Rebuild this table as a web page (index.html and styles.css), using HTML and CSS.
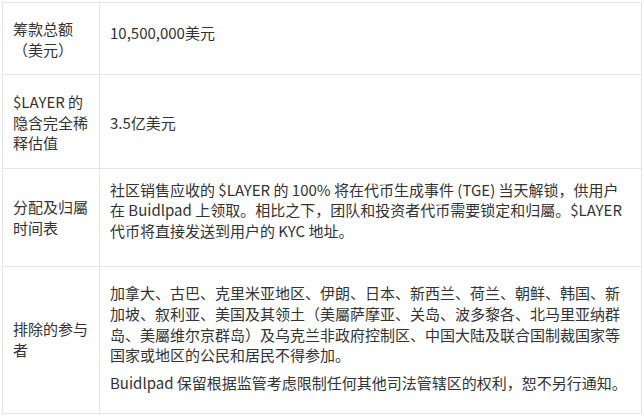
FILE: index.html
```html
<!DOCTYPE html>
<html lang="zh-CN">
<head>
<meta charset="utf-8">
<title>代币销售条款</title>
<link rel="stylesheet" href="styles.css">
</head>
<body>
<table class="terms">
  <tr class="row-raise">
    <th>筹款总额（美元）</th>
    <td><p class="val">10,500,000美元</p></td>
  </tr>
  <tr class="row-fdv">
    <th>$LAYER 的隐含完全稀释估值</th>
    <td>3.5亿美元</td>
  </tr>
  <tr class="row-vest">
    <th>分配及归屬时间表</th>
    <td><p class="val wide">社区销售应收的 $LAYER 的 100% 将在代币生成事件 (TGE) 当天解锁，供用户在 Buidlpad 上领取。相比之下，团队和投资者代币需要锁定和归屬。$LAYER 代币将直接发送到用户的 KYC 地址。</p></td>
  </tr>
  <tr class="row-excl">
    <th>排除的参与者</th>
    <td>
      <p class="val gap">加拿大、古巴、克里米亚地区、伊朗、日本、新西兰、荷兰、朝鲜、韩国、新加坡、叙利亚、美国及其领土（美屬萨摩亚、关岛、波多黎各、北马里亚纳群岛、美屬维尔京群岛）及乌克兰非政府控制区、中国大陆及联合国制裁国家等国家或地区的公民和居民不得参加。</p>
      <p class="val last">Buidlpad 保留根据监管考虑限制任何其他司法管辖区的权利，恕不另行通知。</p>
    </td>
  </tr>
</table>
</body>
</html>
```
FILE: styles.css
```css
html, body {
  margin: 0;
  padding: 0;
  background: #ffffff;
}

body {
  padding: 2px 0 0 2px;
  font-family: "Noto Sans CJK SC", sans-serif;
  font-size: 15px;
  line-height: 20.625px;
  color: #333333;
}

.terms {
  border-collapse: collapse;
  width: 640px;
  table-layout: fixed;
}

.terms th,
.terms td {
  border: 1px solid #e6e6e6;
  padding: 0 10px;
  vertical-align: middle;
  text-align: left;
  font-weight: 400;
}

.terms th {
  width: 76px;
}

.val {
  margin: 0 0 10px;
}

.val.wide {
  margin-bottom: 14px;
}

.val.gap {
  margin-bottom: 7px;
}

.val.last {
  margin-bottom: 3px;
}

.row-raise th,
.row-fdv th,
.row-fdv td {
  padding-top: 3px;
}

.row-raise th, .row-raise td { height: 68px; }
.row-fdv th, .row-fdv td { height: 90px; }
.row-vest th, .row-vest td { height: 97px; }
.row-excl th, .row-excl td { height: 146px; }
```
